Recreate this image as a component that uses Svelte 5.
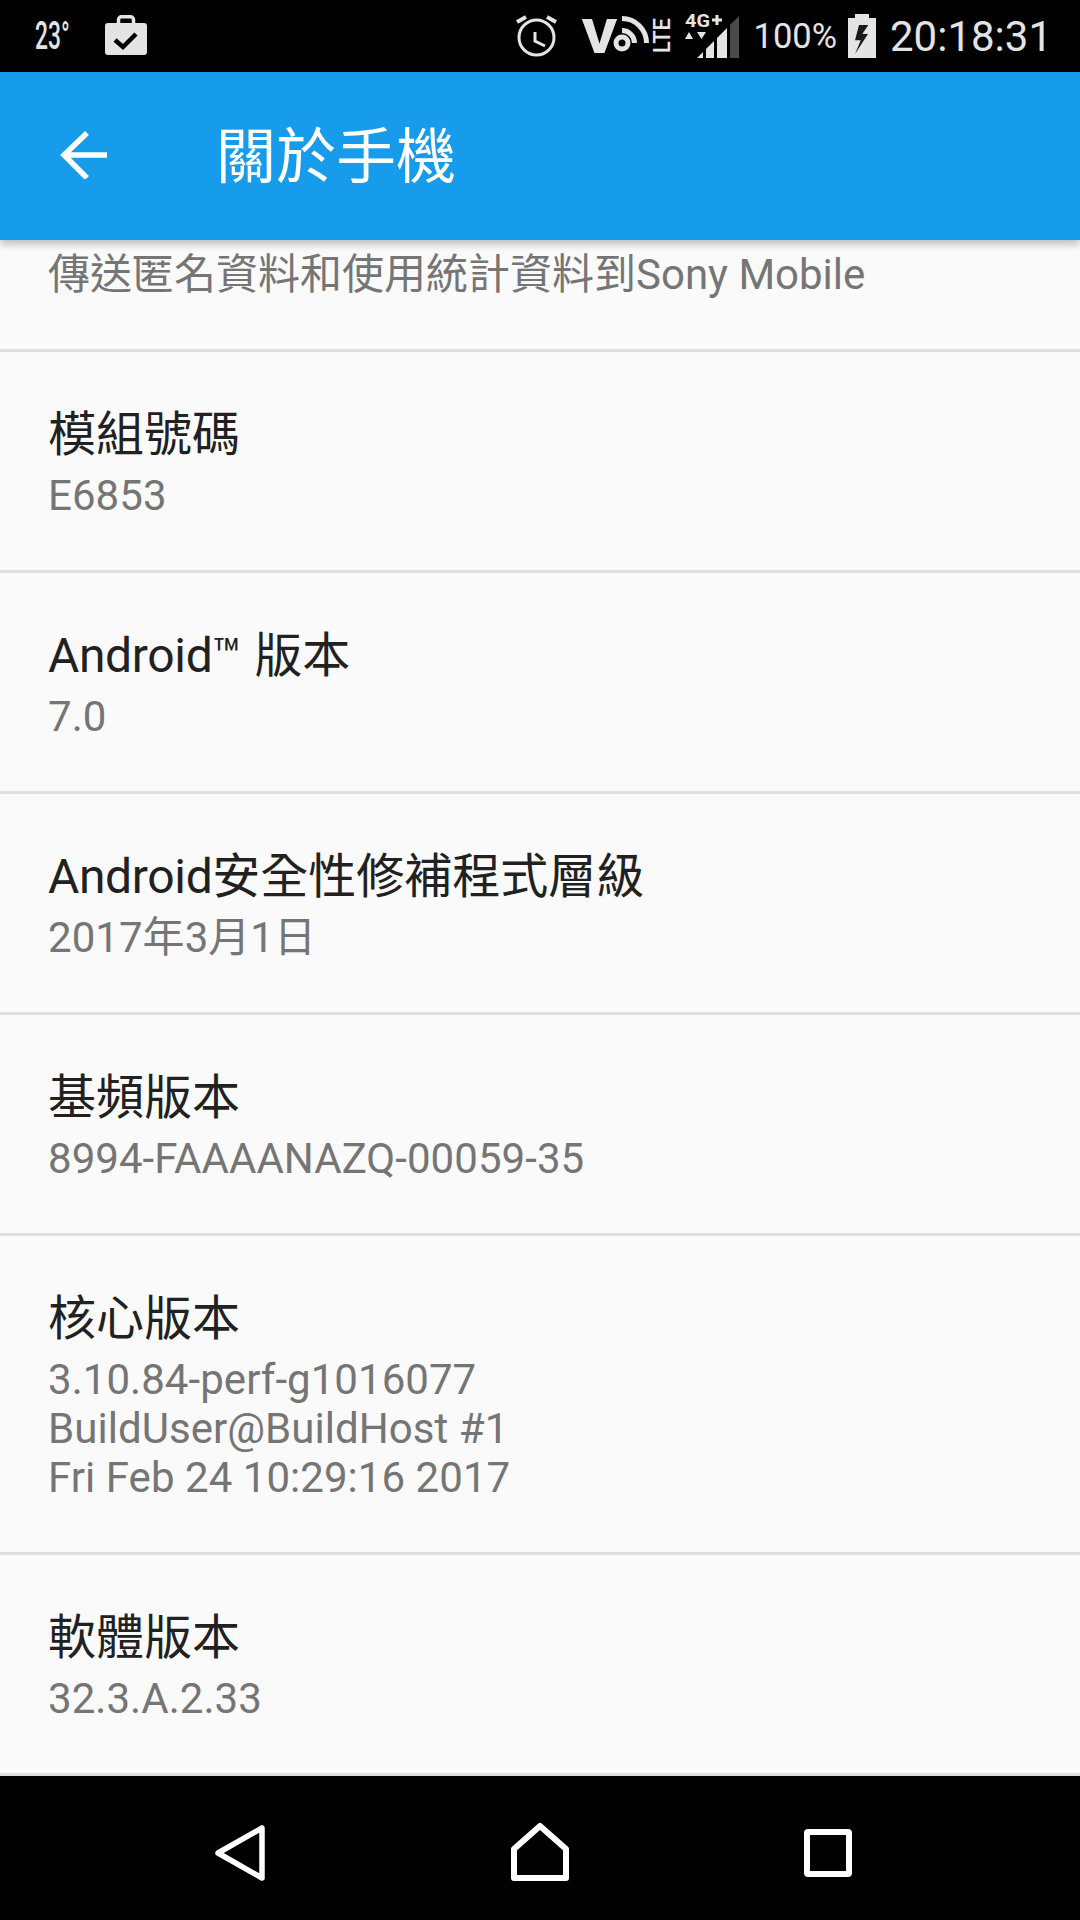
<script lang="ts">
  const rows = [
    { title: '模組號碼', lines: ['E6853'] },
    { latin: 'Android', title: '™ 版本', lines: ['7.0'] },
    { latin: 'Android', title: '安全性修補程式層級', lines: ['2017年3月1日'] },
    { title: '基頻版本', lines: ['8994-FAAAANAZQ-00059-35'] },
    { title: '核心版本', lines: ['3.10.84-perf-g1016077', 'BuildUser@BuildHost #1', 'Fri Feb 24 10:29:16 2017'] },
    { title: '軟體版本', lines: ['32.3.A.2.33'] }
  ];
</script>

<div class="screen">
  <div class="status-bar">
    <span class="temp">23°</span>
    <svg class="briefcase" width="42" height="40" viewBox="0 0 42 40">
      <rect x="13.5" y="1.8" width="15" height="11" rx="3" fill="none" stroke="#e4e4e4" stroke-width="3.5" />
      <rect x="0" y="8" width="42" height="32" rx="3" fill="#e4e4e4" />
      <path d="M10 25l8 7 13-13" fill="none" stroke="#000" stroke-width="4.5" />
    </svg>

    <div class="spacer"></div>

    <svg class="alarm" width="43" height="44" viewBox="0 0 43 44">
      <circle cx="21.5" cy="23.5" r="17.5" fill="none" stroke="#e4e4e4" stroke-width="3" />
      <path d="M20 18v9l10 5" fill="none" stroke="#e4e4e4" stroke-width="3" />
      <path d="M2 8l9-5M32 3l9 5" fill="none" stroke="#e4e4e4" stroke-width="4" />
    </svg>
    <svg class="volte" width="90" height="42" viewBox="0 0 90 42">
      <text x="0" y="38" class="vo-v" textLength="35" lengthAdjust="spacingAndGlyphs">V</text>
      <circle cx="40" cy="28" r="6" fill="none" stroke="#e4e4e4" stroke-width="5" />
      <path d="M40 15.5A12.5 12.5 0 0 1 52.5 28M40 3.5A24.5 24.5 0 0 1 64.5 28" fill="none" stroke="#e4e4e4" stroke-width="5" />
      <text class="lte" transform="translate(88 38) rotate(-90)" textLength="35" lengthAdjust="spacingAndGlyphs">LTE</text>
    </svg>
    <svg class="signal" width="55" height="44" viewBox="0 0 55 44">
      <text x="0" y="13" class="net" textLength="25" lengthAdjust="spacingAndGlyphs">4G</text>
      <path d="M27 6h10M32 1v10" stroke="#e4e4e4" stroke-width="3" fill="none" />
      <path d="M4 18l4 7H0zM12 18h9l-4.5 7z" fill="#e4e4e4" />
      <path d="M12 44l6-6v6zM21 44V35l8-8v17zM32 44V24l10-10v30z" fill="#e4e4e4" />
      <path d="M45 44V11l9-9v42z" fill="#4a4a4a" />
    </svg>
    <span class="percent">100%</span>
    <svg class="battery" width="28" height="44" viewBox="0 0 28 44">
      <path d="M7 0h14v4h7v40H0V4h7z" fill="#e4e4e4" />
      <path d="M20.3 11H11L7 26.3h5.7L7 40l13-20h-5.7z" fill="#1a1a1a" />
    </svg>
    <span class="clock">20:18:31</span>
  </div>

  <div class="app-bar">
    <svg class="back" width="48" height="48" viewBox="0 0 48 48">
      <path d="M47 24H5M27 2L4 24l23 23" fill="none" stroke="#fff" stroke-width="5.5" />
    </svg>
    <h1>關於手機</h1>
  </div>

  <div class="list">
    <div class="cut-row">傳送匿名資料和使用統計資料到Sony Mobile</div>
    {#each rows as row}
      <div class="row">
        <div class="title">{#if row.latin}<span class="latin">{row.latin}</span>{/if}{row.title}</div>
        {#each row.lines as line}
          <div class="sub">{line}</div>
        {/each}
      </div>
    {/each}
  </div>

  <div class="nav-bar">
    <svg class="nav-back" width="50" height="56" viewBox="0 0 50 56">
      <path d="M47 3v50L3 28z" fill="none" stroke="#fff" stroke-width="5.5" stroke-linejoin="round" />
    </svg>
    <svg class="nav-home" width="58" height="59" viewBox="0 0 58 59">
      <path d="M29 4L3 27v29h52V27z" fill="none" stroke="#fff" stroke-width="6" stroke-linejoin="round" />
    </svg>
    <svg width="48" height="48" viewBox="0 0 48 48">
      <rect x="3" y="3" width="42" height="42" rx="1" fill="none" stroke="#fff" stroke-width="6" />
    </svg>
  </div>
</div>

<style>
  :global(body) {
    margin: 0;
    background: #fafafa;
  }

  .screen {
    width: 1080px;
    height: 1920px;
    display: flex;
    flex-direction: column;
    overflow: hidden;
    font-family: Roboto, "Noto Sans CJK TC", sans-serif;
    background: #fafafa;
  }

  .status-bar {
    height: 72px;
    flex: none;
    background: #000;
    color: #e4e4e4;
    display: flex;
    align-items: center;
    padding: 0 28px 0 35px;
    box-sizing: border-box;
  }

  .status-bar svg {
    overflow: visible;
  }

  .temp {
    font-size: 38px;
    font-weight: 500;
    width: 60px;
    margin-right: 10px;
    transform: scaleX(0.6);
    transform-origin: left center;
  }

  .briefcase {
    margin-bottom: 2px;
  }

  .spacer {
    flex: 1;
  }

  .alarm {
    margin-right: 24px;
  }

  .volte {
    margin-right: 13px;
  }

  .vo-v {
    font: 900 49px Roboto, sans-serif;
    fill: #e4e4e4;
  }

  .lte {
    font: 500 24px Roboto, sans-serif;
    fill: #e4e4e4;
  }

  .net {
    font: 700 18px Roboto, sans-serif;
    fill: #e4e4e4;
  }

  .percent {
    font-size: 34.5px;
    margin: 0 11px 0 14px;
  }

  .battery {
    margin-right: 14px;
  }

  .clock {
    font-size: 42px;
  }

  .app-bar {
    height: 168px;
    flex: none;
    background: #169cea;
    color: #fff;
    display: flex;
    align-items: center;
    padding-left: 60px;
    box-shadow: 0 4px 8px rgba(0, 0, 0, 0.25);
    position: relative;
    z-index: 1;
  }

  .back {
    margin-bottom: 2px;
  }

  .app-bar h1 {
    margin: 0 0 10px 108px;
    font-size: 60px;
    font-weight: 400;
  }

  .list {
    flex: 1;
    overflow: hidden;
  }

  .cut-row {
    height: 112px;
    font-size: 42px;
    line-height: 49px;
    color: #757575;
    padding-left: 48px;
    padding-top: 10px;
    box-sizing: border-box;
    border-bottom: 3px solid #dfdfdf;
  }

  .row {
    height: 221px;
    box-sizing: border-box;
    padding: 49px 48px 0;
    border-bottom: 3px solid #dfdfdf;
  }

  .row:nth-last-child(2) {
    height: 319px;
  }

  .title {
    font-size: 48px;
    line-height: 68px;
    margin-bottom: 2px;
    color: #212121;
  }

  .latin {
    letter-spacing: -0.35px;
  }

  .sub {
    font-size: 42px;
    line-height: 49px;
    letter-spacing: 0.05px;
    color: #757575;
  }

  .nav-bar {
    height: 144px;
    flex: none;
    background: #000;
    display: flex;
    align-items: center;
    padding: 10px 0 0 215px;
    box-sizing: border-box;
  }

  .nav-back {
    margin-right: 246px;
  }

  .nav-home {
    margin: -3px 235px 0 0;
  }
</style>
